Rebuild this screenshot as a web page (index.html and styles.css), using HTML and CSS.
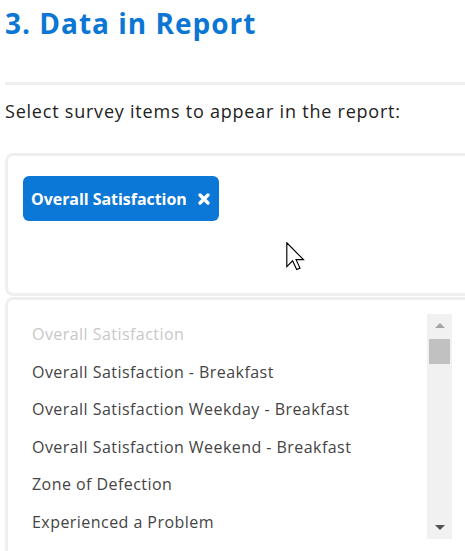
FILE: index.html
```html
<!DOCTYPE html>
<html>
<head>
<meta charset="utf-8">
<link rel="stylesheet" href="styles.css">
</head>
<body>
<div class="page">
  <h1 class="title">3. Data in Report</h1>
  <div class="divider"></div>
  <p class="prompt">Select survey items to appear in the report:</p>
  <div class="card selected">
    <span class="chip"><span class="chip-label">Overall Satisfaction</span><svg class="chip-x" viewBox="0 0 14 14" width="14" height="14"><path d="M3 3 L11 11 M11 3 L3 11" stroke="#fff" stroke-width="3.4" stroke-linecap="round"/></svg></span>
  </div>
  <div class="card options">
    <ul class="list">
      <li class="item disabled">Overall Satisfaction</li>
      <li class="item">Overall Satisfaction - Breakfast</li>
      <li class="item">Overall Satisfaction Weekday - Breakfast</li>
      <li class="item">Overall Satisfaction Weekend - Breakfast</li>
      <li class="item">Zone of Defection</li>
      <li class="item">Experienced a Problem</li>
    </ul>
    <div class="scrollbar">
      <div class="arrow up"></div>
      <div class="thumb"></div>
      <div class="track"></div>
      <div class="arrow down"></div>
    </div>
  </div>
</div>
<svg class="cursor" viewBox="0 0 13 20" width="19" height="29"><path d="M0.5 0.5 L0.5 17 L4.5 13 L7.3 19 L9.6 18 L6.9 12.2 L12 12.2 Z" fill="#fff" stroke="#000" stroke-width="0.8" stroke-linejoin="miter"/></svg>
</body>
</html>
```
FILE: styles.css
```css
html, body {
  margin: 0;
  padding: 0;
  background: #fff;
  overflow: hidden;
}
body {
  width: 465px;
  height: 551px;
  position: relative;
  font-family: "Open Sans", "Liberation Sans", sans-serif;
}
.page {
  padding-left: 5px;
  width: 500px;
}
.title {
  margin: 0;
  padding-top: 4px;
  font-size: 28px;
  line-height: 38px;
  font-weight: 700;
  color: #0b76d4;
  letter-spacing: 1px;
}
.divider {
  margin-top: 40px;
  height: 3px;
  background: #efefef;
}
.prompt {
  margin: 13px 0 0 0;
  font-size: 18px;
  line-height: 26px;
  color: #222;
  letter-spacing: 0.78px;
}
.card {
  border: 3px solid #efefef;
  border-radius: 8px;
  background: #fff;
}
.selected {
  margin-top: 29px;
  height: 143px;
  padding: 20px 15px;
  box-sizing: border-box;
}
.chip {
  display: inline-flex;
  align-items: center;
  gap: 10px;
  height: 45px;
  padding: 0 8px;
  box-sizing: border-box;
  background: #0b77d6;
  color: #fff;
  border-radius: 6px;
  font-weight: 700;
  font-size: 16px;
  white-space: nowrap;
}
.chip-label {
  letter-spacing: -0.05px;
}
.options {
  margin-top: 1px;
  display: flex;
  padding: 14px 0 14px 24px;
  height: 300px;
  box-sizing: border-box;
}
.list {
  list-style: none;
  margin: 0;
  padding: 0;
  width: 395px;
}
.item {
  height: 37.5px;
  box-sizing: border-box;
  padding-top: 3px;
  display: flex;
  align-items: center;
  font-size: 16px;
  color: #444;
  letter-spacing: 0.45px;
  white-space: nowrap;
}
.item.disabled {
  color: #c8c8c8;
}
.scrollbar {
  width: 25px;
  height: 225px;
  background: #f1f1f1;
  display: flex;
  flex-direction: column;
  align-items: center;
}
.arrow {
  width: 0;
  height: 0;
  border-left: 5px solid transparent;
  border-right: 5px solid transparent;
}
.arrow.up {
  margin-top: 9px;
  border-bottom: 5px solid #a3a3a3;
}
.arrow.down {
  margin-bottom: 9px;
  border-top: 5px solid #505050;
}
.thumb {
  margin-top: 11px;
  width: 21px;
  height: 25px;
  background: #c1c1c1;
}
.track {
  flex: 1;
}
.cursor {
  position: absolute;
  left: 286px;
  top: 242px;
}
```
